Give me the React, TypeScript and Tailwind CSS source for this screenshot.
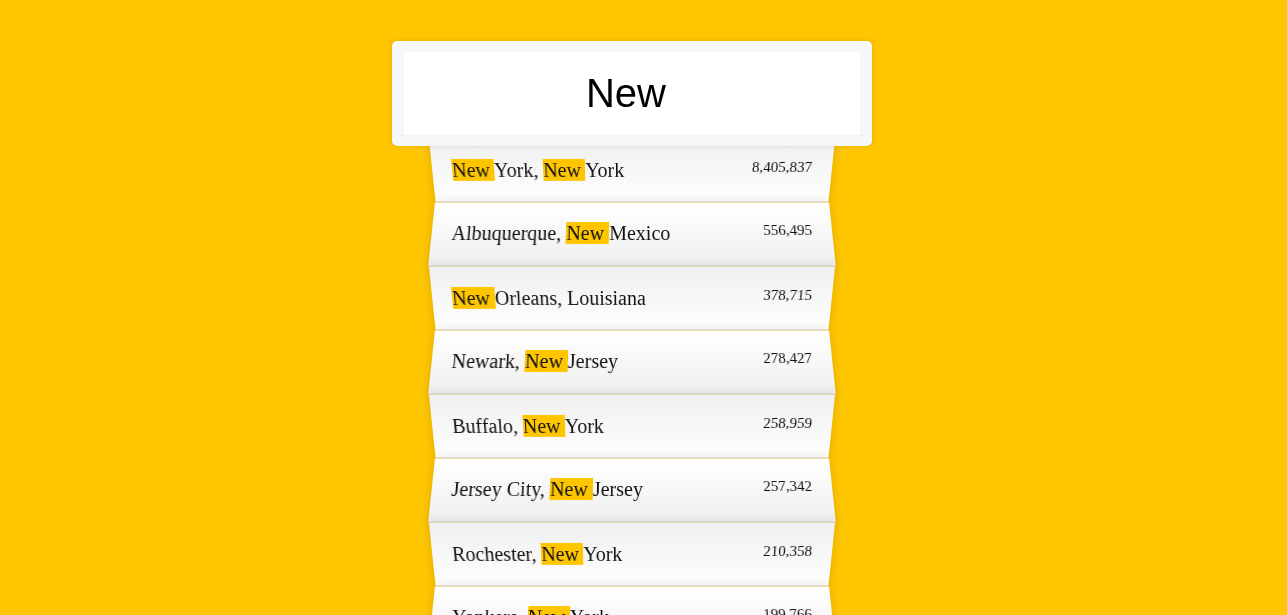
import React from 'react';

// --- Data ---
const cities = [
  { city: 'New York', state: 'New York', population: '8,405,837' },
  { city: 'Albuquerque', state: 'New Mexico', population: '556,495' },
  { city: 'New Orleans', state: 'Louisiana', population: '378,715' },
  { city: 'Newark', state: 'New Jersey', population: '278,427' },
  { city: 'Buffalo', state: 'New York', population: '258,959' },
  { city: 'Jersey City', state: 'New Jersey', population: '257,342' },
  { city: 'Rochester', state: 'New York', population: '210,358' },
  { city: 'Yonkers', state: 'New York', population: '199,766' },
  { city: 'Paterson', state: 'New Jersey', population: '145,948' },
];

const query = 'New';

// --- Components ---

// highlights the whole word "New" (with its trailing space), as in the shot
const Highlighted: React.FC<{ text: string }> = ({ text }) => {
  const parts = text.split(/\bNew /);
  return (
    <>
      {parts.map((part, i) => (
        <React.Fragment key={i}>
          {i > 0 && <span className="bg-[#ffc600]">{query} </span>}
          {part}
        </React.Fragment>
      ))}
    </>
  );
};

const Suggestion: React.FC<{ name: string, population: string, even: boolean }> = ({ name, population, even }) => (
  <li
    className={
      even
        ? "flex justify-between p-5 border-b border-[#d8d8d8] shadow-[0_0_10px_rgba(0,0,0,0.14)] bg-[linear-gradient(to_bottom,#ffffff_0%,#efefef_100%)] [transform:perspective(100px)_rotateX(3deg)_translateY(2px)_scale(1.001)]"
        : "flex justify-between p-5 border-b border-[#d8d8d8] shadow-[0_0_10px_rgba(0,0,0,0.14)] bg-[linear-gradient(to_top,#ffffff_0%,#efefef_100%)] [transform:perspective(100px)_rotateX(-3deg)_translateY(3px)]"
    }
  >
    <span>
      <Highlighted text={name} />
    </span>
    <span className="text-[15px]">{population}</span>
  </li>
);

export default function App() {
  return (
    <div className="h-[615px] overflow-hidden bg-[#ffc600] flex justify-center pr-[23px] font-['Liberation_Serif',serif] text-[20px] leading-[normal] text-[#111]">
      <form className="w-[400px]">
        <input
          type="text"
          readOnly
          defaultValue={query}
          className="relative z-10 block w-[480px] h-[105px] -ml-[40px] mt-[41px] -mb-[10px] py-5 pl-[14px] pr-[26px] bg-white text-center text-[40px] leading-[normal] text-black font-['Liberation_Sans',sans-serif] border-[10px] border-[#f7f7f7] rounded-[5px] outline-0 shadow-[0_0_5px_rgba(0,0,0,0.12),inset_0_0_2px_rgba(0,0,0,0.19)]"
        />
        <ul className="relative m-0 p-0 list-none">
          {cities.map((c, i) => (
            <Suggestion
              key={c.city}
              name={`${c.city}, ${c.state}`}
              population={c.population}
              even={i % 2 === 1}
            />
          ))}
        </ul>
      </form>
    </div>
  );
}
